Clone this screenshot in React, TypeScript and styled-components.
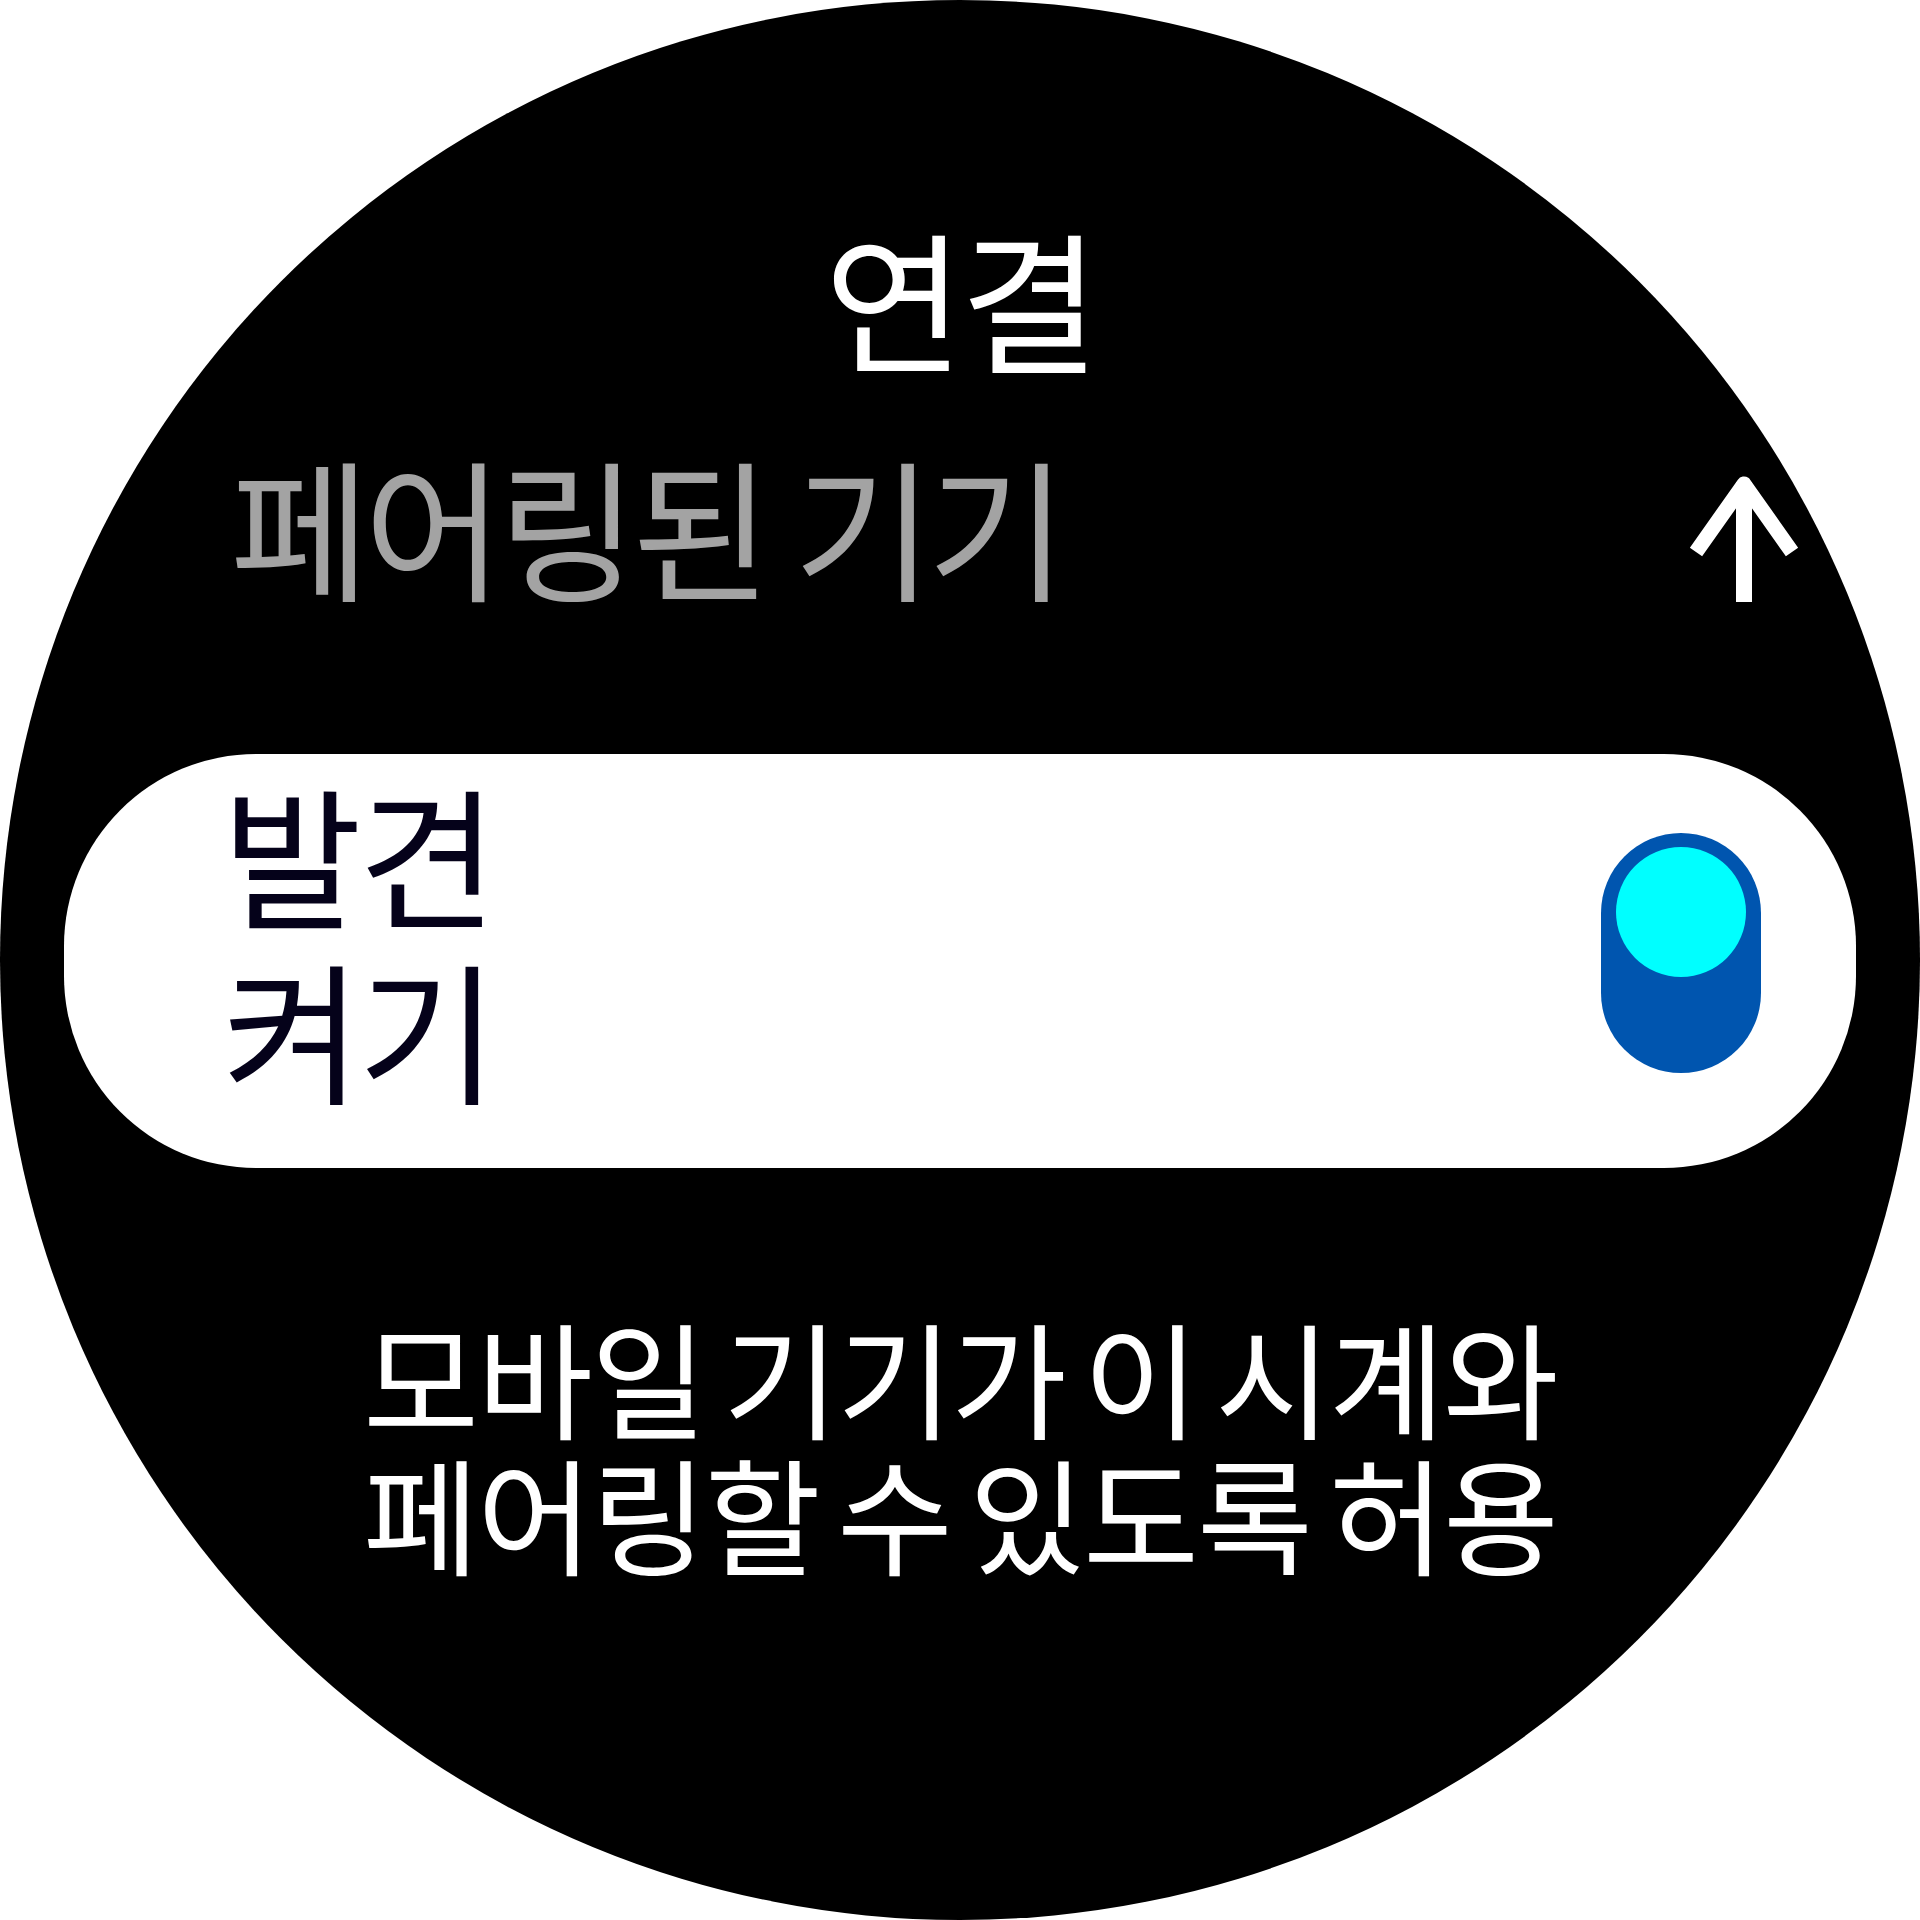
import { FC } from "react";
import styled, { createGlobalStyle } from "styled-components";

const GlobalStyle = createGlobalStyle`
  html, body {
    margin: 0;
    padding: 0;
    background: #ffffff;
  }
  body {
    font-family: "Noto Sans CJK KR", "Noto Sans", sans-serif;
  }
`;

const Page = styled.div`
  width: 1920px;
  height: 1920px;
  background: #ffffff;
`;

const Watch = styled.div`
  width: 1920px;
  height: 1920px;
  border-radius: 50%;
  background: #000000;
  display: flex;
  flex-direction: column;
  align-items: stretch;
  padding-top: 222px;
  box-sizing: border-box;
  overflow: hidden;
`;

const Title = styled.h1`
  margin: 0;
  font-size: 152px;
  line-height: 148px;
  font-weight: 400;
  letter-spacing: -4px;
  color: #ffffff;
  text-align: center;
`;

const MenuRow = styled.div`
  display: flex;
  justify-content: space-between;
  align-items: flex-start;
  margin-top: 80px;
  padding: 0 120px 0 230px;
`;

const MenuLabel = styled.span<{ $tone: string }>`
  font-size: 152px;
  line-height: 148px;
  letter-spacing: -6px;
  color: ${(p) => p.$tone};
`;

const ScrollHint = styled.svg`
  width: 112px;
  height: 128px;
  margin-top: 24px;
  flex-shrink: 0;
`;

const SelectedItem = styled.div`
  margin: 152px 64px 0;
  height: 414px;
  border-radius: 192px;
  background: #ffffff;
  display: flex;
  justify-content: space-between;
  align-items: flex-start;
  padding: 11px 95px 0 158px;
  box-sizing: border-box;
`;

const ItemLabel = styled.div`
  font-size: 152px;
  line-height: 175px;
  letter-spacing: -4px;
  color: #05021a;
  max-width: 340px;
  word-break: keep-all;
`;

const Toggle = styled.div<{ $on: boolean }>`
  width: 160px;
  height: 240px;
  border-radius: 80px;
  background: #0055af;
  display: flex;
  flex-direction: column;
  justify-content: ${(p) => (p.$on ? "flex-start" : "flex-end")};
  align-items: center;
  padding: 14px 0;
  box-sizing: border-box;
  align-self: center;
  margin-bottom: 28px;
`;

const Knob = styled.div`
  width: 130px;
  height: 130px;
  border-radius: 50%;
  background: #00ffff;
`;

const Description = styled.p`
  margin: 139px auto 0;
  max-width: 1260px;
  font-size: 126px;
  line-height: 136px;
  letter-spacing: -2px;
  word-spacing: -8px;
  color: #ffffff;
  text-align: center;
  word-break: keep-all;
`;

const ArrowUp: FC = () => (
  <ScrollHint viewBox="0 0 112 128">
    <rect x="48" y="8" width="16" height="120" fill="#ffffff" />
    <polyline
      points="8,78 56,10 104,78"
      fill="none"
      stroke="#ffffff"
      strokeWidth="15"
      strokeLinejoin="round"
    />
  </ScrollHint>
);

export default function App() {
  return (
    <Page>
      <GlobalStyle />
      <Watch>
        <Title>연결</Title>
        <MenuRow>
          <MenuLabel $tone="#a3a3a3">페어링된 기기</MenuLabel>
          <ArrowUp />
        </MenuRow>
        <SelectedItem>
          <ItemLabel>발견 켜기</ItemLabel>
          <Toggle $on>
            <Knob />
          </Toggle>
        </SelectedItem>
        <Description>모바일 기기가 이 시계와 페어링할 수 있도록 허용</Description>
      </Watch>
    </Page>
  );
}
